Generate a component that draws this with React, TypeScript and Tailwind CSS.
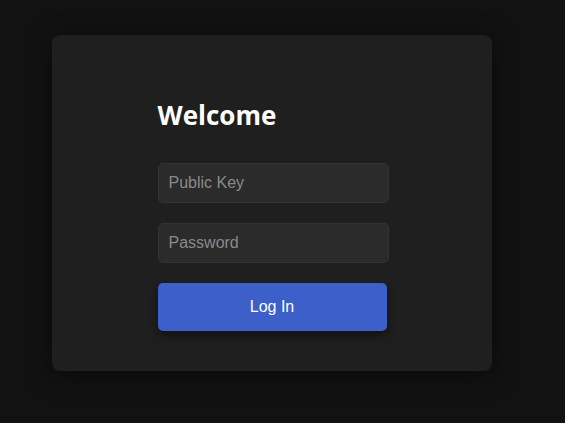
export default function App() {
  return (
    <div className="min-h-[423px] w-full bg-[#121212] pt-[35px] pl-[52px]">
      <div className="flex h-[336px] w-[440px] justify-center rounded-lg bg-[#1f1f1f] shadow-[0_4px_24px_rgba(0,0,0,0.5)]">
        <div className="flex w-[231px] flex-col pt-[54px] pl-[1px]">
          <h1 className="mb-[22px] font-['Open_Sans',sans-serif] text-[26px] leading-[52px] font-bold text-white">
            Welcome
          </h1>
          <input
            type="text"
            placeholder="Public Key"
            className="h-10 w-[231px] rounded-[5px] border border-[#333] bg-[#2b2b2b] px-[10px] font-['Liberation_Sans',Arial,sans-serif] text-base text-white outline-none placeholder:text-[#8a8a8a]"
          />
          <input
            type="password"
            placeholder="Password"
            className="mt-5 h-10 w-[231px] rounded-[5px] border border-[#333] bg-[#2b2b2b] px-[10px] font-['Liberation_Sans',Arial,sans-serif] text-base text-white outline-none placeholder:text-[#8a8a8a]"
          />
          <button className="mt-5 h-12 w-[229px] rounded-[5px] bg-[#3c5fc9] font-['Liberation_Sans',Arial,sans-serif] text-base text-white shadow-[0_4px_10px_rgba(0,0,0,0.5)]">
            Log In
          </button>
        </div>
      </div>
    </div>
  );
}
